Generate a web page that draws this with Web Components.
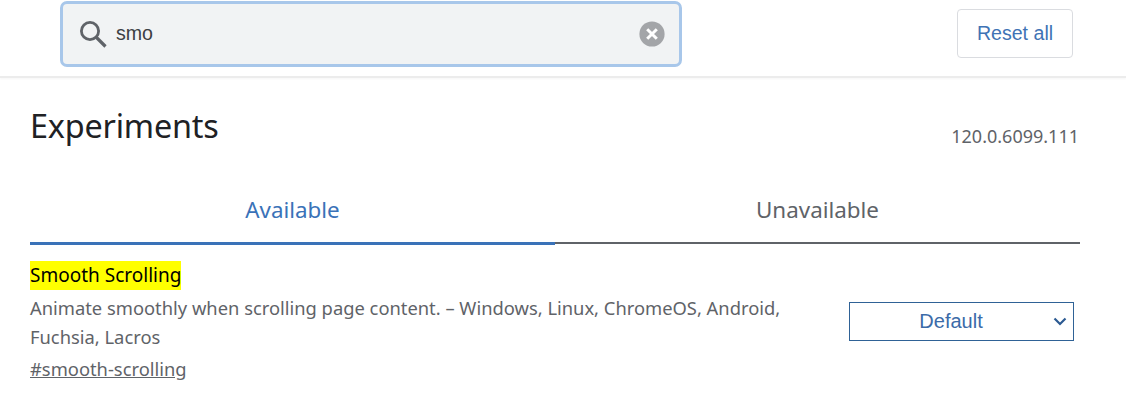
<!DOCTYPE html>
<html lang="en">
<head>
<meta charset="utf-8">
<title>Experiments</title>
<style>
  html, body { margin: 0; background: #fff; overflow: hidden; }
  body { font-family: "Noto Sans", "Open Sans", sans-serif; }
</style>
</head>
<body>
<flags-app>
  <flags-header slot="header"></flags-header>
  <flags-title slot="title" version="120.0.6099.111">Experiments</flags-title>
  <flags-tabs slot="tabs"></flags-tabs>
  <flag-row slot="row" name="Smooth Scrolling" link="#smooth-scrolling">
    Animate smoothly when scrolling page content. – Windows, Linux, ChromeOS, Android, Fuchsia, Lacros
  </flag-row>
</flags-app>

<script>
class FlagsApp extends HTMLElement {
  constructor() {
    super();
    this.attachShadow({mode: 'open'}).innerHTML = `
      <style>
        :host { display: block; width: 1126px; height: 409px; overflow: hidden; }
        main { display: flex; flex-direction: column; width: 1050px; padding-left: 30px; }
      </style>
      <slot name="header"></slot>
      <main>
        <slot name="title"></slot>
        <slot name="tabs"></slot>
        <slot name="row"></slot>
      </main>
    `;
  }
}

class FlagsHeader extends HTMLElement {
  constructor() {
    super();
    this.attachShadow({mode: 'open'}).innerHTML = `
      <style>
        :host { display: flex; box-sizing: border-box; height: 78px; padding: 1px 53px 0 60px;
          justify-content: space-between; align-items: flex-start;
          border-bottom: 2px solid #ececec; box-shadow: 0 1px 2px #f6f6f6;
          font-family: "Liberation Sans", Arial, sans-serif; }
        button { box-sizing: border-box; width: 116px; height: 49px; margin-top: 8px; padding: 0;
          background: #fff; border: 1px solid #dadce0; border-radius: 4px;
          color: #3f73b5; font: 19.6px "Liberation Sans", Arial, sans-serif; }
      </style>
      <flags-search value="smo"></flags-search>
      <button>Reset all</button>
    `;
  }
}

class FlagsSearch extends HTMLElement {
  constructor() {
    super();
    this.attachShadow({mode: 'open'}).innerHTML = `
      <style>
        :host { display: flex; box-sizing: border-box; width: 622px; height: 66px; align-items: center;
          padding: 0 14px 1px 16px; background: #f1f3f4; border: 3px solid #a8c7ea; border-radius: 7px; }
        svg { display: block; flex: none; }
        .value { flex: 1; margin-left: 9px; color: #3c4043; font-size: 19.6px; padding-bottom: 1px; }
      </style>
      <svg width="28" height="28" viewBox="0 0 28 28" fill="none" stroke="#5f6368">
        <circle cx="11" cy="11" r="8.6" stroke-width="2.8"/>
        <path d="M17.5 17.5 L26.5 26.5" stroke-width="3.2"/>
      </svg>
      <span class="value"></span>
      <svg width="26" height="26" viewBox="0 0 26 26">
        <circle cx="13" cy="13" r="12.6" fill="#a3a5a8"/>
        <path d="M8.2 8.2 L17.8 17.8 M17.8 8.2 L8.2 17.8" stroke="#fff" stroke-width="3" fill="none"/>
      </svg>
    `;
    this.shadowRoot.querySelector('.value').textContent = this.getAttribute('value');
  }
}

class FlagsTitle extends HTMLElement {
  constructor() {
    super();
    this.attachShadow({mode: 'open'}).innerHTML = `
      <style>
        :host { display: flex; justify-content: space-between; height: 110px; }
        h1 { margin: 25px 0 0; font-weight: 400; font-size: 32.4px; line-height: 44px; color: #202124; letter-spacing: -0.2px; }
        span { margin: 44px 1px 0 0; font-size: 18px; line-height: 28px; color: #5f6368; }
      </style>
      <h1><slot></slot></h1>
      <span></span>
    `;
    this.shadowRoot.querySelector('span').textContent = this.getAttribute('version');
  }
}

class FlagsTabs extends HTMLElement {
  constructor() {
    super();
    this.attachShadow({mode: 'open'}).innerHTML = `
      <style>
        :host { display: grid; grid-template-columns: 525px 525px; height: 57px; font-size: 22.4px; }
        div { box-sizing: border-box; height: 57px; padding-top: 3.5px; text-align: center; line-height: 36px; }
        .on { color: #3a72b8; border-bottom: 3px solid #3a72b8; }
        .off { color: #5f6368; border-bottom: 2px solid #5f6368; height: 56px; }
      </style>
      <div class="on">Available</div>
      <div class="off">Unavailable</div>
    `;
  }
}

class FlagRow extends HTMLElement {
  constructor() {
    super();
    this.attachShadow({mode: 'open'}).innerHTML = `
      <style>
        :host { display: flex; justify-content: space-between; align-items: flex-start; padding-top: 16px; }
        .text { width: 780px; }
        .name { display: block; height: 32px; }
        mark { display: inline-block; background: #ffff00; color: #000; font-size: 19px; line-height: 29px; }
        p { margin: 0; font-size: 18.35px; line-height: 29px; color: #5f6368; }
        a { display: block; margin-top: 3px; font-size: 18.35px; line-height: 29px; color: #5f6368; text-decoration: underline; }
        flag-select { margin: 41px 6px 0 0; }
      </style>
      <div class="text">
        <div class="name"><mark></mark></div>
        <p><slot></slot></p>
        <a></a>
      </div>
      <flag-select>Default</flag-select>
    `;
    this.shadowRoot.querySelector('mark').textContent = this.getAttribute('name');
    this.shadowRoot.querySelector('a').textContent = this.getAttribute('link');
  }
}

class FlagSelect extends HTMLElement {
  constructor() {
    super();
    this.attachShadow({mode: 'open'}).innerHTML = `
      <style>
        :host { display: flex; box-sizing: border-box; width: 225px; height: 39px; align-items: center;
          border: 1px solid #2f6296; color: #3b6ba8; font: 20px "Liberation Sans", Arial, sans-serif; }
        span { flex: 1; text-align: center; padding-right: 1px; }
        svg { display: block; margin-right: 6px; }
      </style>
      <span><slot></slot></span>
      <svg width="14" height="9" viewBox="0 0 14 9" fill="none" stroke="#2c5a92" stroke-width="2.2">
        <path d="M1.5 1.5 L7 7 L12.5 1.5"/>
      </svg>
    `;
  }
}

customElements.define('flags-app', FlagsApp);
customElements.define('flags-header', FlagsHeader);
customElements.define('flags-search', FlagsSearch);
customElements.define('flags-title', FlagsTitle);
customElements.define('flags-tabs', FlagsTabs);
customElements.define('flag-row', FlagRow);
customElements.define('flag-select', FlagSelect);
</script>
</body>
</html>
